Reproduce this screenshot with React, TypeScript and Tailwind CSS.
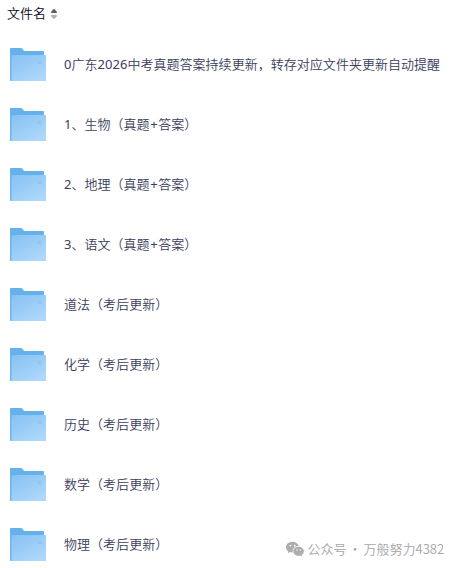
const files = [
  '0广东2026中考真题答案持续更新，转存对应文件夹更新自动提醒',
  '1、生物（真题+答案）',
  '2、地理（真题+答案）',
  '3、语文（真题+答案）',
  '道法（考后更新）',
  '化学（考后更新）',
  '历史（考后更新）',
  '数学（考后更新）',
  '物理（考后更新）',
];

function FolderIcon() {
  return (
    <svg width="36" height="34" viewBox="0 0 36 34" className="shrink-0">
      <defs>
        <linearGradient id="folder" x1="0" y1="0" x2="0.7" y2="1">
          <stop offset="0" stopColor="#86c1f3" />
          <stop offset="0.5" stopColor="#98ccf6" />
          <stop offset="1" stopColor="#add8fb" />
        </linearGradient>
      </defs>
      <path d="M0 .8Q0 0 .8 0H11q.8 0 1.3.6L14 3h19.200q.8 0 .8.8V30H0z" fill="#64b1eb" />
      <path d="M1.500 7H35.400q.6 0 .6.6V32.400q0 .6-.6.6H.6Q0 33 0 32.400L1.500 8z" fill="url(#folder)" />
      <path d="M0 5h1.500v28H.6Q0 33 0 32.400z" fill="#6fb5ee" />
      <path d="M27.500 13.500h4.500M28 15.500h4" stroke="#7fbaf0" strokeWidth=".7" />
    </svg>
  );
}

function SortIcon() {
  return (
    <svg width="6" height="10" viewBox="0 0 6 10">
      <path d="M2.200.4Q3-.2 3.800.4L5.700 2.600Q6.400 4 5 4H1Q-.4 4 .3 2.600z" fill="#5c5f66" />
      <path d="M2.200 9.600Q3 10.200 3.800 9.600L5.700 7.400Q6.400 6 5 6H1Q-.4 6 .3 7.400z" fill="#aeb0b5" />
    </svg>
  );
}

function WechatIcon() {
  return (
    <svg width="18" height="16" viewBox="0 0 18 16">
      <path
        d="M6.500.8C2.900.8 0 3.200 0 6.200c0 1.700.9 3.200 2.300 4.200l-.6 1.900 2.200-1.200c.8.3 1.700.4 2.600.4h.3C6.200 7.700 9 5 12.800 5.100 12.100 2.600 9.500.8 6.500.8z"
        fill="#adadad"
      />
      <path
        d="M12.600 5.800c-3 0-5.300 2-5.300 4.500s2.400 4.500 5.300 4.500c.7 0 1.300-.1 1.900-.3l1.800 1-.5-1.600c1.300-.8 2.100-2.100 2.100-3.600 0-2.500-2.400-4.500-5.300-4.500z"
        fill="#adadad"
      />
      <g fill="#fff">
        <circle cx="4.400" cy="4.600" r=".9" />
        <circle cx="8.700" cy="4.600" r=".9" />
        <circle cx="10.900" cy="8.900" r=".7" />
        <circle cx="14.400" cy="8.900" r=".7" />
      </g>
    </svg>
  );
}

function FileName({ name }: { name: string }) {
  // odd parts are the digits and the plus sign
  const parts = name.split(/(\d+|\+)/);

  return (
    <span className="whitespace-nowrap tracking-[0.03px]">
      {parts.map((part, i) =>
        i % 2 ? (
          <span key={i} className={part === '+' ? 'px-[0.5px] font-normal' : 'font-normal'}>
            {part}
          </span>
        ) : (
          part
        ),
      )}
    </span>
  );
}

export default function App() {
  return (
    <div className="relative h-[568px] w-[458px] overflow-hidden bg-white font-['Noto_Sans','Noto_Sans_CJK_SC',sans-serif] text-[13px] font-[350] text-[#3a3d5c]">
      <div className="flex h-[35px] items-center gap-[5px] pb-[7px] pl-[7px] text-[#050a24]">
        <span>文件名</span>
        <SortIcon />
      </div>
      <ul>
        {files.map((name) => (
          <li key={name} className="flex h-[60px] items-center gap-[18px] pl-[10px]">
            <FolderIcon />
            <FileName name={name} />
          </li>
        ))}
      </ul>
      <div className="absolute top-[539px] left-[286px] flex h-5 items-center gap-[3.5px] text-[#a6a6a6]">
        <WechatIcon />
        <div className="flex whitespace-nowrap font-['Noto_Sans_CJK_SC',sans-serif]">
          <span>公众号</span>
          <span className="w-[17px] text-center">·</span>
          <span>万般努力4382</span>
        </div>
      </div>
    </div>
  );
}
